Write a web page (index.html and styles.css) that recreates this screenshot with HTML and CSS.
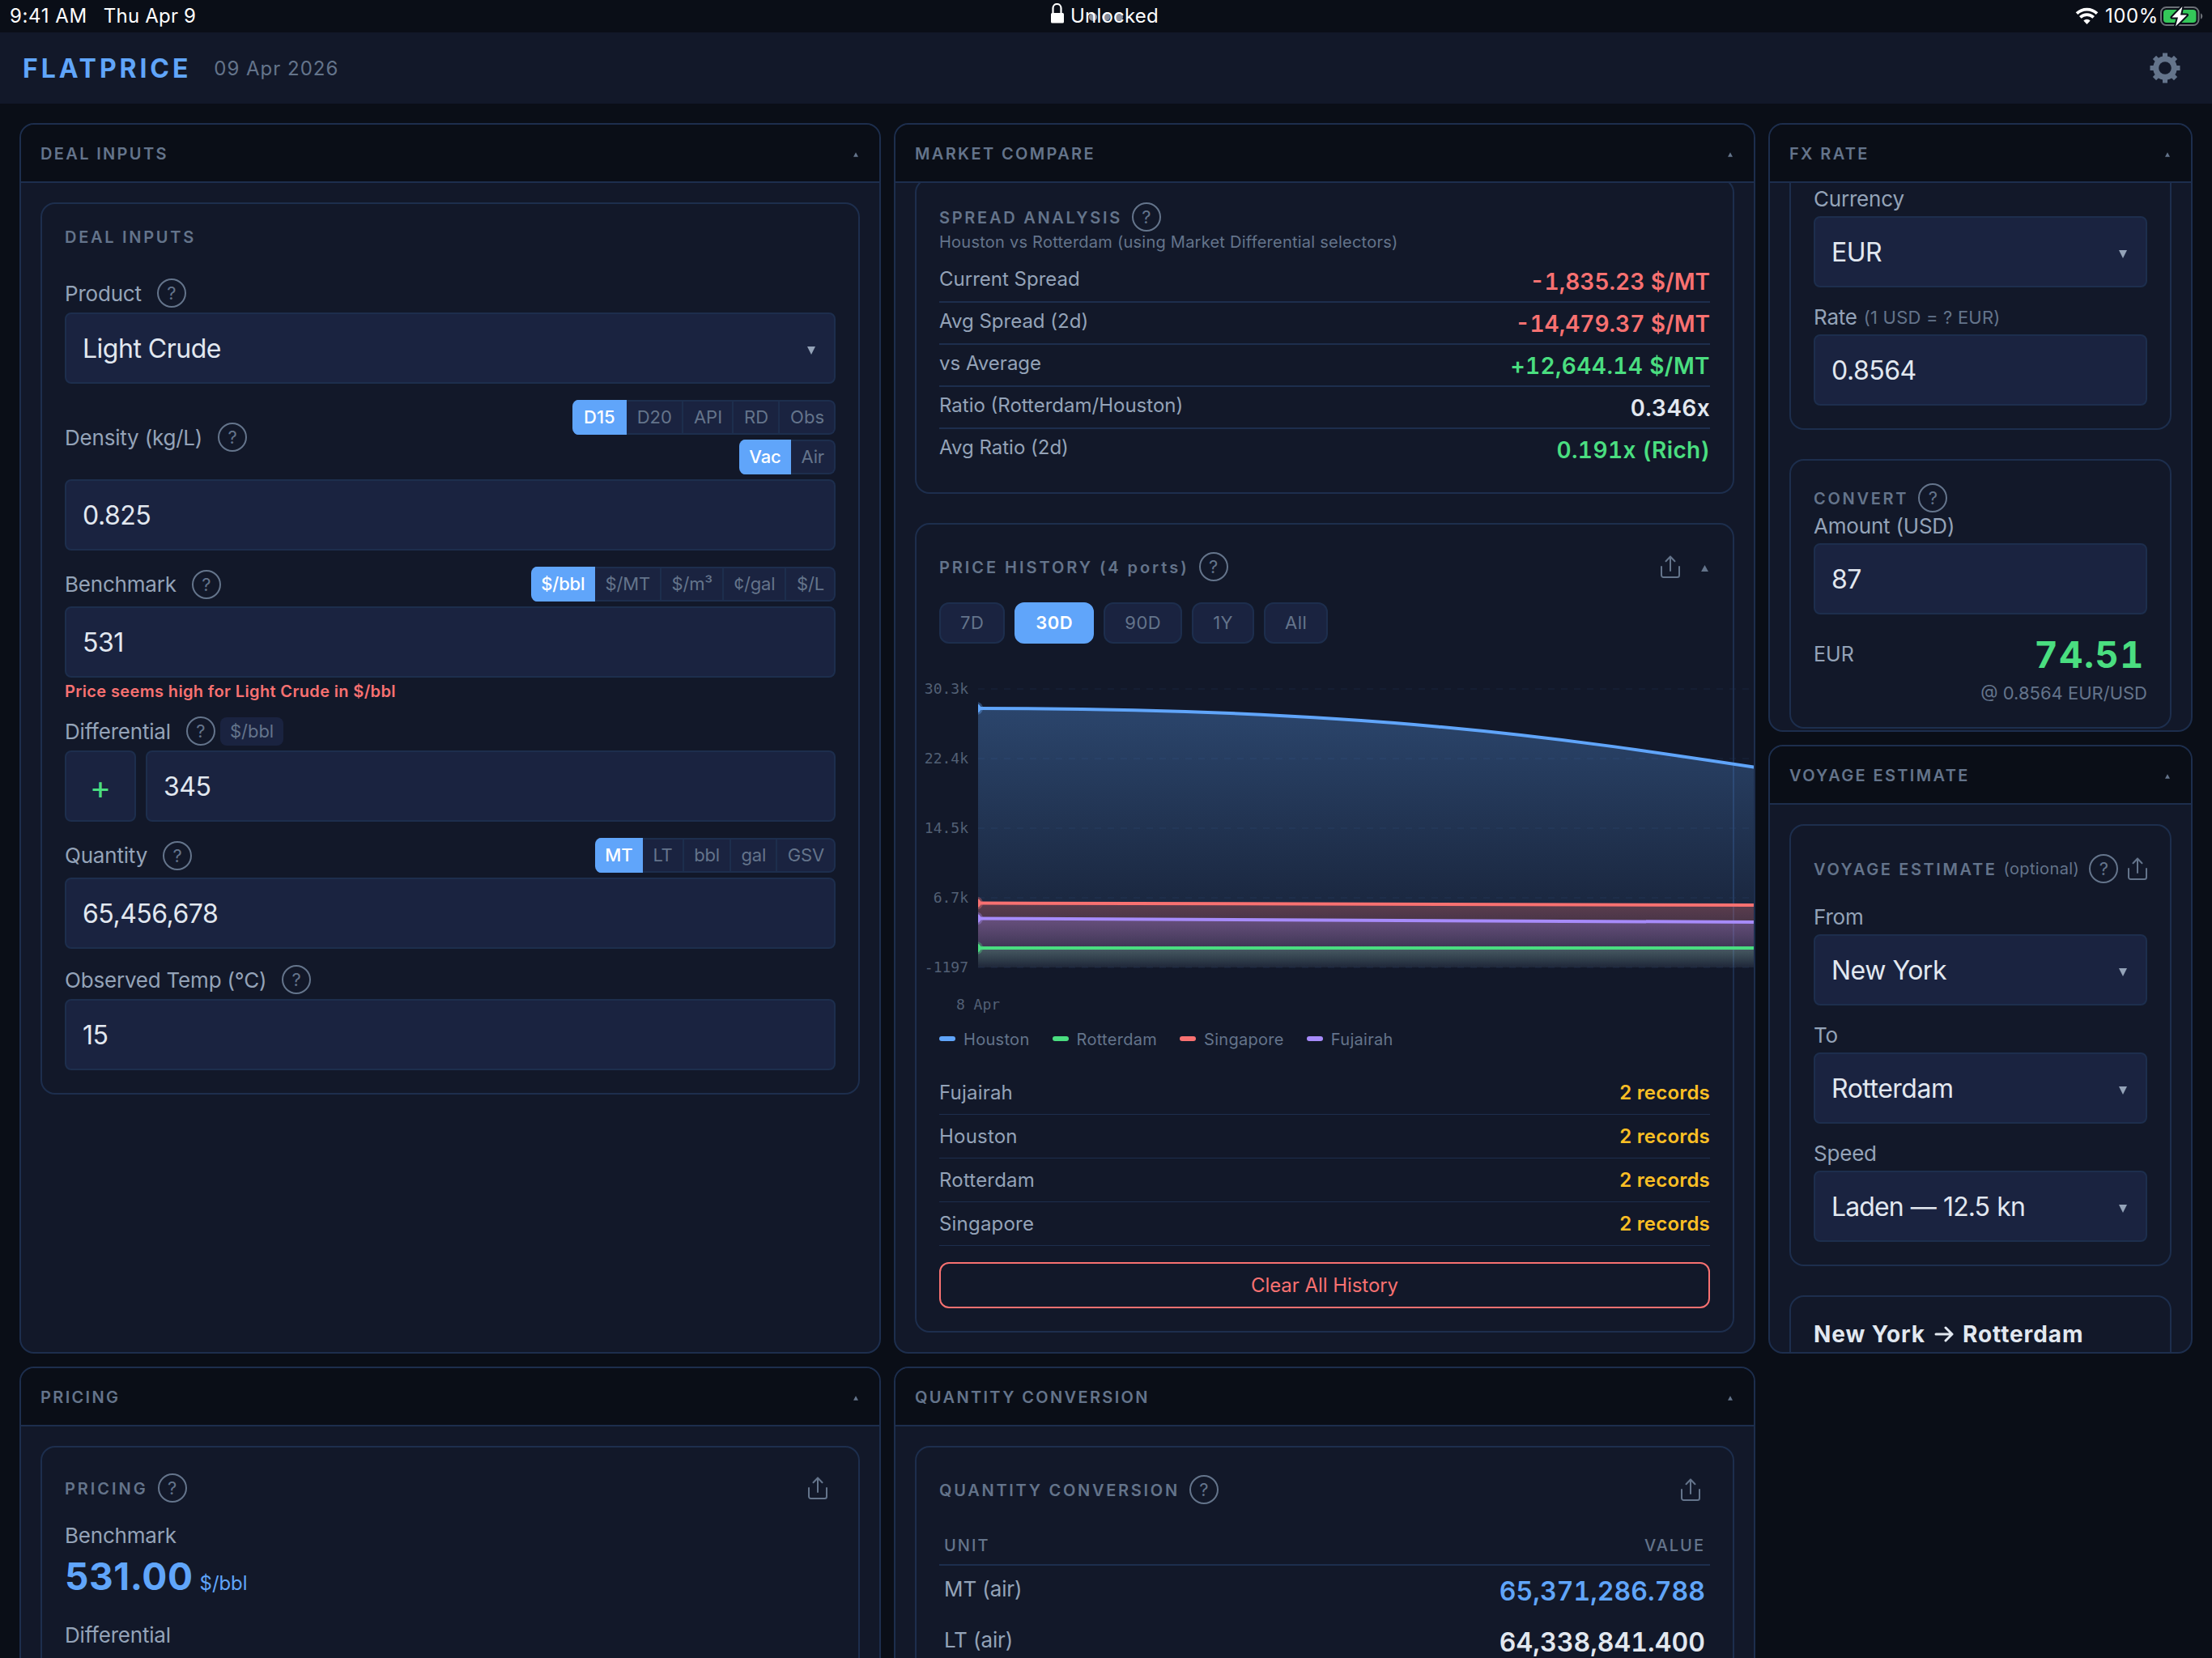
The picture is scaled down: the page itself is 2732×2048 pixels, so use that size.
FILE: index.html
```html
<!DOCTYPE html>
<html lang="en">

<head>
    <meta charset="UTF-8">
    <meta name="viewport" content="width=device-width, initial-scale=1.0">
    <title>FLATPRICE</title>
    <link rel="stylesheet" href="styles.css">
</head>

<body>
    <svg class="defs" width="0" height="0">
        <symbol id="share" viewBox="0 0 24 28">
            <path d="M12 19V1.5M6.5 7.2L12 1.5l5.5 5.7M1 14v10.5A2.5 2.5 0 0 0 3.5 27h17a2.5 2.5 0 0 0 2.5-2.5V14" fill="none" stroke="currentColor" stroke-width="2" stroke-linecap="round" stroke-linejoin="round"/>
        </symbol>
        <symbol id="up" viewBox="0 0 10 9"><path d="M5 0l5 9H0z" fill="currentColor"/></symbol>
        <symbol id="down" viewBox="0 0 10 10"><path d="M0 0h10L5 10z" fill="currentColor"/></symbol>
    </svg>

    <div class="statusbar">
        <span class="time">9:41 AM</span>
        <span class="day">Thu Apr 9</span>
        <div class="lock">
            <svg width="18" height="26" viewBox="0 0 18 26">
                <path d="M4 17V7a5 5 0 0 1 10 0v6" transform="translate(-.5 -1)" fill="none" stroke="#fff" stroke-width="2.2"/>
                <rect x="1" y="12" width="16" height="12.5" rx="1.5" fill="#fff"/>
            </svg>
            <span>Unlocked</span>
            <i class="dots"><b></b><b></b><b></b></i>
        </div>
        <div class="power">
            <svg width="29" height="22" viewBox="0 0 29 22">
                <path d="M2 7.6a18 18 0 0 1 25 0M6.3 12.4a11.8 11.8 0 0 1 16.4 0" fill="none" stroke="#fff" stroke-width="3.7"/>
                <path d="M14.5 21l-4.2-4.6a6 6 0 0 1 8.4 0z" fill="#fff"/>
            </svg>
            <span>100%</span>
            <svg class="battery" width="54" height="26" viewBox="0 0 54 26">
                <rect x="1" y="2" width="46.5" height="22" rx="6.5" fill="none" stroke="#6c7077" stroke-width="2"/>
                <path d="M50 9.5c3 1 3 6 0 7z" fill="#6c7077"/>
                <rect x="4" y="5" width="40.5" height="16" rx="4" fill="#34c759"/>
                <path d="M27.5 1L14.5 14.5h7.5L19 25.5l14-14h-8z" fill="#fff" stroke="#0a0e17" stroke-width="4" stroke-linejoin="round" paint-order="stroke"/>
            </svg>
        </div>
    </div>

    <header class="topbar">
        <h1>FLATPRICE</h1>
        <span class="date">09 Apr 2026</span>
        <svg class="gear" width="38" height="38" viewBox="-19 -19 38 38">
            <g fill="#64748b">
                <rect x="-3" y="-18.5" width="6" height="37"/>
                <rect x="-3" y="-18.5" width="6" height="37" transform="rotate(45)"/>
                <rect x="-3" y="-18.5" width="6" height="37" transform="rotate(90)"/>
                <rect x="-3" y="-18.5" width="6" height="37" transform="rotate(135)"/>
                <circle r="14.8"/>
            </g>
            <circle r="7.8" fill="#121829"/>
        </svg>
    </header>

    <main class="grid">
        <section class="panel">
            <h2 class="panel-head">DEAL INPUTS <svg class="tri"><use href="#up"/></svg></h2>
            <div class="panel-body">
                <div class="card">
                    <h3 class="title inputs-title">DEAL INPUTS</h3>

                    <div class="row"><label>Product</label><i class="help">?</i></div>
                    <div class="field">Light Crude <svg class="caret"><use href="#down"/></svg></div>

                    <div class="row">
                        <label>Density (kg/L)</label><i class="help">?</i>
                        <div class="segs">
                            <div class="seg"><span class="on">D15</span><span>D20</span><span>API</span><span>RD</span><span>Obs</span></div>
                            <div class="seg narrow"><span class="on">Vac</span><span>Air</span></div>
                        </div>
                    </div>
                    <div class="field">0.825</div>

                    <div class="row">
                        <label>Benchmark</label><i class="help">?</i>
                        <div class="segs">
                            <div class="seg narrow"><span class="on">$/bbl</span><span>$/MT</span><span>$/m³</span><span>¢/gal</span><span>$/L</span></div>
                        </div>
                    </div>
                    <div class="field">531</div>
                    <p class="warning">Price seems high for Light Crude in $/bbl</p>

                    <div class="row"><label>Differential</label><i class="help">?</i><span class="chip">$/bbl</span></div>
                    <div class="split">
                        <button class="sign">+</button>
                        <div class="field">345</div>
                    </div>

                    <div class="row">
                        <label>Quantity</label><i class="help">?</i>
                        <div class="segs">
                            <div class="seg narrow"><span class="on">MT</span><span>LT</span><span>bbl</span><span>gal</span><span>GSV</span></div>
                        </div>
                    </div>
                    <div class="field">65,456,678</div>

                    <div class="row"><label>Observed Temp (°C)</label><i class="help">?</i></div>
                    <div class="field">15</div>
                </div>
            </div>
        </section>

        <section class="panel">
            <h2 class="panel-head">MARKET COMPARE <svg class="tri"><use href="#up"/></svg></h2>
            <div class="panel-body">
                <div class="card spread">
                    <div class="title"><h3>SPREAD ANALYSIS</h3><i class="help">?</i></div>
                    <p class="sub">Houston vs Rotterdam (using Market Differential selectors)</p>
                    <div class="stat"><span>Current Spread</span><b class="red">-1,835.23 $/MT</b></div>
                    <div class="stat"><span>Avg Spread (2d)</span><b class="red">-14,479.37 $/MT</b></div>
                    <div class="stat"><span>vs Average</span><b class="green">+12,644.14 $/MT</b></div>
                    <div class="stat"><span>Ratio (Rotterdam/Houston)</span><b>0.346x</b></div>
                    <div class="stat"><span>Avg Ratio (2d)</span><b class="green">0.191x (Rich)</b></div>
                </div>

                <div class="card history">
                    <div class="title">
                        <h3>PRICE HISTORY (4 ports)</h3><i class="help">?</i>
                        <svg class="share"><use href="#share"/></svg>
                        <svg class="tri big"><use href="#up"/></svg>
                    </div>
                    <div class="ranges">
                        <span>7D</span><span class="on">30D</span><span>90D</span><span>1Y</span><span>All</span>
                    </div>
                    <svg class="chart" width="1034" height="445" viewBox="1132 815 1034 445">
                        <defs>
                            <linearGradient id="gBlue" gradientUnits="userSpaceOnUse" x1="0" y1="875" x2="0" y2="1195"><stop stop-color="#60a5fa" stop-opacity=".32"/><stop offset="1" stop-color="#60a5fa" stop-opacity=".04"/></linearGradient>
                            <linearGradient id="gRed" gradientUnits="userSpaceOnUse" x1="0" y1="1115" x2="0" y2="1195"><stop stop-color="#f87171" stop-opacity=".3"/><stop offset="1" stop-color="#f87171" stop-opacity=".02"/></linearGradient>
                            <linearGradient id="gViolet" gradientUnits="userSpaceOnUse" x1="0" y1="1134" x2="0" y2="1195"><stop stop-color="#a78bfa" stop-opacity=".3"/><stop offset="1" stop-color="#a78bfa" stop-opacity=".02"/></linearGradient>
                            <linearGradient id="gGreen" gradientUnits="userSpaceOnUse" x1="0" y1="1171" x2="0" y2="1195"><stop stop-color="#4ade80" stop-opacity=".25"/><stop offset="1" stop-color="#4ade80" stop-opacity=".02"/></linearGradient>
                            <clipPath id="plot"><rect x="1208" y="815" width="958" height="400"/></clipPath>
                        </defs>
                        <g class="lines">
                            <path d="M1208 851H2166M1208 937H2166M1208 1023H2166M1208 1109H2166M1208 1195H2166"/>
                        </g>
                        <g class="axis">
                            <text x="1196" y="857" text-anchor="end">30.3k</text>
                            <text x="1196" y="943" text-anchor="end">22.4k</text>
                            <text x="1196" y="1029" text-anchor="end">14.5k</text>
                            <text x="1196" y="1115" text-anchor="end">6.7k</text>
                            <text x="1196" y="1201" text-anchor="end">-1197</text>
                            <text x="1208" y="1247" text-anchor="middle">8 Apr</text>
                        </g>
                        <g clip-path="url(#plot)">
                            <path d="M1208 875C2166 875 2166 1020 3124 1020V1195H1208z" fill="url(#gBlue)"/>
                            <path class="line" d="M1208 875C2166 875 2166 1020 3124 1020" stroke="#60a5fa"/>
                            <path d="M1208 1171H2166V1195H1208z" fill="url(#gGreen)"/>
                            <path d="M1208 1115.5C2166 1115.5 2166 1120.5 3124 1120.5V1195H1208z" fill="url(#gRed)"/>
                            <path class="line" d="M1208 1115.5C2166 1115.5 2166 1120.5 3124 1120.5" stroke="#f87171"/>
                            <path d="M1208 1134.5C2166 1134.5 2166 1143.5 3124 1143.5V1195H1208z" fill="url(#gViolet)"/>
                            <path class="line" d="M1208 1134.5C2166 1134.5 2166 1143.5 3124 1143.5" stroke="#a78bfa"/>
                            <path class="line" d="M1208 1171H2166" stroke="#4ade80"/>
                            <g class="point" fill="#60a5fa"><circle cx="1206" cy="875" r="8"/><circle cx="1206" cy="875" r="5.5"/></g>
                            <g class="point" fill="#f87171"><circle cx="1206" cy="1115.5" r="8"/><circle cx="1206" cy="1115.5" r="5.5"/></g>
                            <g class="point" fill="#a78bfa"><circle cx="1206" cy="1134.5" r="8"/><circle cx="1206" cy="1134.5" r="5.5"/></g>
                            <g class="point" fill="#4ade80"><circle cx="1206" cy="1171" r="8"/><circle cx="1206" cy="1171" r="5.5"/></g>
                        </g>
                    </svg>
                    <div class="legend">
                        <span class="c-blue">Houston</span><span class="c-green">Rotterdam</span><span class="c-red">Singapore</span><span class="c-violet">Fujairah</span>
                    </div>
                    <div class="record"><span>Fujairah</span><b>2 records</b></div>
                    <div class="record"><span>Houston</span><b>2 records</b></div>
                    <div class="record"><span>Rotterdam</span><b>2 records</b></div>
                    <div class="record"><span>Singapore</span><b>2 records</b></div>
                    <button class="clear">Clear All History</button>
                </div>
            </div>
        </section>

        <div class="side">
            <section class="panel">
                <h2 class="panel-head">FX RATE <svg class="tri"><use href="#up"/></svg></h2>
                <div class="panel-body">
                    <div class="card cut">
                        <div class="row plain"><label>Currency</label></div>
                        <div class="field">EUR <svg class="caret"><use href="#down"/></svg></div>
                        <div class="row plain"><label>Rate</label><small>(1 USD = ? EUR)</small></div>
                        <div class="field">0.8564</div>
                    </div>
                    <div class="card">
                        <div class="title"><h3>CONVERT</h3><i class="help">?</i></div>
                        <div class="row plain"><label>Amount (USD)</label></div>
                        <div class="field">87</div>
                        <div class="result"><span>EUR</span><b>74.51</b></div>
                        <p class="note">@ 0.8564 EUR/USD</p>
                    </div>
                </div>
            </section>

            <section class="panel">
                <h2 class="panel-head">VOYAGE ESTIMATE <svg class="tri"><use href="#up"/></svg></h2>
                <div class="panel-body">
                    <div class="card">
                        <div class="title voyage-title">
                            <h3>VOYAGE ESTIMATE</h3><small>(optional)</small><i class="help">?</i>
                            <svg class="share"><use href="#share"/></svg>
                        </div>
                        <div class="row plain"><label>From</label></div>
                        <div class="field">New York <svg class="caret"><use href="#down"/></svg></div>
                        <div class="row plain"><label>To</label></div>
                        <div class="field">Rotterdam <svg class="caret"><use href="#down"/></svg></div>
                        <div class="row plain"><label>Speed</label></div>
                        <div class="field laden">Laden — 12.5 kn <svg class="caret"><use href="#down"/></svg></div>
                    </div>
                    <div class="card">
                        <p class="route">New York
                            <svg width="24" height="20" viewBox="0 0 24 20"><path d="M2 10h20M14 2l8 8-8 8" fill="none" stroke="currentColor" stroke-width="3" stroke-linecap="round" stroke-linejoin="round"/></svg>
                            Rotterdam</p>
                    </div>
                </div>
            </section>
        </div>

        <section class="panel">
            <h2 class="panel-head">PRICING <svg class="tri"><use href="#up"/></svg></h2>
            <div class="panel-body">
                <div class="card pricing">
                    <div class="title"><h3>PRICING</h3><i class="help">?</i><svg class="share"><use href="#share"/></svg></div>
                    <div class="row"><label>Benchmark</label></div>
                    <p class="price">531.00<small>$/bbl</small></p>
                    <div class="row"><label>Differential</label></div>
                </div>
            </div>
        </section>

        <section class="panel">
            <h2 class="panel-head">QUANTITY CONVERSION <svg class="tri"><use href="#up"/></svg></h2>
            <div class="panel-body">
                <div class="card quantity">
                    <div class="title"><h3>QUANTITY CONVERSION</h3><i class="help">?</i><svg class="share"><use href="#share"/></svg></div>
                    <div class="unit-head"><span>UNIT</span><span>VALUE</span></div>
                    <div class="unit"><span>MT (air)</span><b class="blue">65,371,286.788</b></div>
                    <div class="unit"><span>LT (air)</span><b>64,338,841.400</b></div>
                </div>
            </div>
        </section>
    </main>
</body>

</html>
```
FILE: styles.css
```css
:root {
    --bg: #0a0e17;
    --panel: #121829;
    --field: #1a2340;
    --line: #1d2e4d;
    --text: #e2e8f0;
    --label: #94a3b8;
    --muted: #64748b;
    --blue: #60a5fa;
    --green: #4ade80;
    --red: #f87171;
}

* {
    box-sizing: border-box;
    margin: 0;
    padding: 0;
}

html,
body {
    width: 2732px;
    height: 2048px;
    overflow: hidden;
}

body {
    background: var(--bg);
    color: var(--text);
    font-family: Inter, "Liberation Sans", sans-serif;
    font-size: 26px;
    white-space: nowrap;
}

i {
    font-style: normal;
}

svg {
    flex: none;
}

.defs {
    display: block;
    height: 0;
}

/* status bar */
.statusbar {
    height: 40px;
    display: flex;
    align-items: center;
    padding: 0 10px 1px 12px;
    color: #fff;
    font-size: 24px;
    position: relative;
}

.time {
    letter-spacing: .6px;
    margin-right: 20px;
}

.day {
    letter-spacing: .2px;
}

.lock {
    position: absolute;
    left: 1297px;
    top: 0;
    height: 39px;
    display: flex;
    align-items: center;
    gap: 7px;
    letter-spacing: .2px;
}

.lock svg {
    margin-top: -6px;
}

.lock span {
    position: relative;
    z-index: 1;
}

.dots {
    position: absolute;
    left: 48px;
    top: 16px;
    display: flex;
    gap: 6px;
}

.dots b {
    width: 10px;
    height: 10px;
    border-radius: 50%;
    background: #858996;
}

.power {
    margin-left: auto;
    display: flex;
    align-items: center;
    gap: 8px;
    letter-spacing: .6px;
}

.battery {
    margin-left: -6px;
}

/* top bar */
.topbar {
    height: 88px;
    background: var(--panel);
    display: flex;
    align-items: center;
    padding: 0 39px 0 28px;
}

.topbar h1 {
    font-size: 32px;
    font-weight: 700;
    color: var(--blue);
    letter-spacing: 3.9px;
}

.date {
    font-size: 24px;
    color: var(--muted);
    letter-spacing: 1px;
    margin-left: 28px;
}

.gear {
    margin-left: auto;
}

/* panels */
.grid {
    padding: 24px;
    display: grid;
    grid-template-columns: 1064px 1064px 524px;
    grid-template-rows: 1520px 1520px;
    gap: 16px;
}

.side {
    display: flex;
    flex-direction: column;
    gap: 16px;
}

.side .panel {
    height: 752px;
}

.panel {
    background: var(--panel);
    border: 2px solid var(--line);
    border-radius: 18px;
    overflow: hidden;
    display: flex;
    flex-direction: column;
}

.panel-head {
    flex: none;
    height: 72px;
    padding: 2px 26px 0 24px;
    display: flex;
    align-items: center;
    justify-content: space-between;
    background: var(--bg);
    border-bottom: 2px solid var(--line);
    color: var(--muted);
    font-size: 20px;
    font-weight: 600;
    letter-spacing: 2.35px;
}

.tri {
    width: 6px;
    height: 6px;
    margin-top: 1px;
    color: var(--muted);
}

.panel-body {
    flex: 1;
    min-height: 0;
    padding: 24px;
    overflow: hidden;
}

.card {
    border: 2px solid var(--line);
    border-radius: 18px;
    padding: 28px;
}

.card + .card {
    margin-top: 36px;
}

.cut {
    margin-top: -24px;
    padding-top: 3px;
    border-top: 0;
    border-radius: 0 0 18px 18px;
}

.title {
    display: flex;
    align-items: center;
    height: 36px;
    color: var(--muted);
    font-size: 20px;
}

.title h3,
h3.title {
    font-size: 20px;
    font-weight: 600;
    letter-spacing: 2.72px;
}

.title h3 {
    padding-top: 2px;
}

.title .help {
    margin-left: 12px;
}

.inputs-title {
    height: 26px;
    margin-bottom: 38px;
}

.help {
    flex: none;
    width: 36px;
    height: 36px;
    border: 2px solid var(--muted);
    border-radius: 50%;
    color: var(--muted);
    font-size: 22px;
    line-height: 32px;
    text-align: center;
}

.share {
    width: 24px;
    height: 28px;
    color: var(--muted);
}

/* form */
.row {
    display: flex;
    align-items: center;
    min-height: 36px;
    margin-bottom: 6px;
}

.row.plain {
    height: 32px;
    min-height: 32px;
}

.row label {
    color: var(--label);
    letter-spacing: -.2px;
}

.row .help {
    margin-left: 19px;
}

.row small {
    margin-left: 8px;
    padding-top: 1px;
    font-size: 22px;
    letter-spacing: .2px;
    color: var(--muted);
}

.field {
    height: 88px;
    padding: 0 23px 0 20px;
    display: flex;
    align-items: center;
    justify-content: space-between;
    background: var(--field);
    border: 2px solid var(--line);
    border-radius: 8px;
    font-size: 32px;
    letter-spacing: -.5px;
}

.field + .row,
.split + .row {
    margin-top: 20px;
}

.laden {
    letter-spacing: -.9px;
    word-spacing: 1px;
}

.caret {
    width: 10px;
    height: 10px;
    margin-top: 5px;
    color: var(--label);
}

.segs {
    margin-left: auto;
    display: flex;
    flex-direction: column;
    align-items: flex-end;
    gap: 6px;
}

.seg {
    display: flex;
    height: 43px;
    border-radius: 8px;
    overflow: hidden;
    background: var(--field);
    color: var(--muted);
    font-size: 22px;
    line-height: 39px;
}

.seg span {
    padding: 0 12px 0 13px;
    border: 2px solid var(--line);
    border-left: 0;
}

.seg span:last-child {
    border-radius: 0 8px 8px 0;
}

.seg .on {
    padding-left: 14px;
    background: var(--blue);
    border-color: var(--blue);
    color: #fff;
    font-weight: 500;
}

.narrow span {
    letter-spacing: -.15px;
    padding-left: 12.5px;
}

.narrow .on {
    padding: 0 10.5px 0 12px;
}

.warning {
    margin-top: 5px;
    height: 23px;
    line-height: 24px;
    margin-bottom: 20px;
    color: var(--red);
    font-size: 20px;
    font-weight: 600;
    letter-spacing: .36px;
}

.chip {
    margin-left: 6px;
    height: 35px;
    padding: 0 12px;
    border-radius: 8px;
    background: var(--field);
    color: var(--muted);
    font-size: 22px;
    line-height: 35px;
}

.split {
    display: flex;
    gap: 12px;
}

.split .field {
    flex: 1;
}

.sign {
    width: 88px;
    height: 88px;
    padding-top: 3px;
    background: var(--field);
    border: 2px solid var(--line);
    border-radius: 8px;
    color: var(--green);
    font: 400 40px Inter, sans-serif;
}

/* spread analysis */
.spread {
    margin-top: -30px;
    height: 390px;
}

.sub {
    height: 26px;
    line-height: 26px;
    margin-bottom: 10px;
    color: var(--muted);
    font-size: 20px;
    letter-spacing: .24px;
}

.stat {
    display: flex;
    justify-content: space-between;
    align-items: center;
    height: 52px;
    border-bottom: 2px solid var(--line);
}

.stat:last-child {
    border-bottom-color: transparent;
}

.stat span {
    color: var(--label);
    font-size: 24px;
    margin-bottom: 5px;
}

.stat b {
    padding-top: 1px;
    font-size: 28px;
    font-weight: 600;
    font-variant-numeric: tabular-nums;
    letter-spacing: .4px;
}

.red {
    color: var(--red);
}

.stat .red {
    letter-spacing: 0;
}

.green {
    color: var(--green);
}

.blue {
    color: var(--blue);
}

/* price history */
.history .title {
    height: 48px;
    margin-bottom: 20px;
}

.history h3 {
    letter-spacing: 2.95px;
}

.history .share {
    margin-left: auto;
}

.big {
    width: 9px;
    height: 8px;
    margin: 3px 2px 0 26px;
}

.ranges {
    display: flex;
    gap: 12px;
    margin-bottom: 20px;
}

.ranges span {
    height: 51px;
    padding: 0 24px;
    border: 2px solid var(--line);
    border-radius: 12px;
    background: var(--field);
    color: var(--muted);
    font-size: 22px;
    line-height: 47px;
    letter-spacing: .5px;
}

.ranges .on {
    background: var(--blue);
    border-color: var(--blue);
    color: #fff;
    font-weight: 600;
}

.chart {
    display: block;
    position: relative;
    margin-left: -28px;
}

.lines path {
    stroke: var(--line);
    stroke-width: 2;
    stroke-dasharray: 8 8;
    opacity: .28;
}

.axis text {
    font: 18px "DejaVu Sans Mono", monospace;
    fill: #526075;
}

.line {
    fill: none;
    stroke-width: 4;
}

.point circle:first-child {
    opacity: .35;
}

.legend {
    display: flex;
    gap: 28px;
    height: 24px;
    margin: 12px 0 27px;
    color: var(--muted);
    font-size: 20px;
    letter-spacing: .3px;
    line-height: 24px;
}

.legend span {
    display: flex;
    gap: 10px;
}

.legend span::before {
    content: "";
    width: 20px;
    height: 6px;
    margin-top: 8px;
    border-radius: 3px;
    background: currentColor;
}

.c-blue::before { color: #60a5fa; }
.c-green::before { color: #4ade80; }
.c-red::before { color: #f87171; }
.c-violet::before { color: #a78bfa; }

.record {
    display: flex;
    justify-content: space-between;
    align-items: center;
    height: 54px;
    border-bottom: 1px solid var(--line);
    color: var(--label);
    font-size: 24px;
    letter-spacing: .2px;
}

.record b {
    color: #fbbf24;
    font-weight: 600;
}

.clear {
    display: block;
    width: 100%;
    height: 57px;
    margin-top: 20px;
    border: 2px solid var(--red);
    border-radius: 12px;
    background: none;
    color: var(--red);
    font: 24px Inter, sans-serif;
    letter-spacing: -.05px;
}

/* fx convert */
.result {
    display: flex;
    align-items: center;
    justify-content: space-between;
    height: 58px;
    margin-top: 20px;
    color: var(--label);
}

.result span {
    font-size: 25px;
}

.result b {
    color: var(--green);
    font-size: 45px;
    font-weight: 700;
    font-variant-numeric: tabular-nums;
    letter-spacing: 1.6px;
    padding-right: 3px;
}

.note {
    height: 28px;
    margin-top: 5px;
    line-height: 28px;
    color: var(--muted);
    font-size: 22px;
    text-align: right;
}

/* voyage */
.voyage-title {
    height: 50px;
    margin-bottom: 18px;
}

.voyage-title h3 {
    letter-spacing: 2.6px;
}

.voyage-title small {
    font-size: 20px;
    margin-left: 8px;
    letter-spacing: .4px;
}

.voyage-title .share {
    margin-left: 12px;
}

.route {
    display: flex;
    align-items: center;
    gap: 11px;
    height: 36px;
    font-size: 28px;
    font-weight: 700;
    letter-spacing: .9px;
}

/* pricing */
.pricing .title {
    height: 44px;
    margin-bottom: 18px;
}

.pricing h3 {
    letter-spacing: 2.95px;
}

.pricing .share,
.quantity .share {
    margin-left: auto;
    margin-right: 10px;
}

.quantity .share {
    margin-right: 12px;
}

.price {
    height: 54px;
    line-height: 54px;
    margin-bottom: 27px;
    color: var(--blue);
    font-size: 46px;
    font-weight: 700;
    letter-spacing: .6px;
}

.price small {
    margin-left: 8px;
    font-size: 24px;
    font-weight: 400;
    letter-spacing: -.1px;
}

/* quantity conversion */
.quantity {
    height: 1300px;
}

.quantity .title {
    height: 48px;
    margin-bottom: 22px;
}

.unit-head,
.unit {
    display: flex;
    justify-content: space-between;
    align-items: center;
    height: 63px;
    padding: 0 6px;
}

.unit-head {
    height: 48px;
    border-bottom: 2px solid var(--line);
    color: var(--muted);
    font-size: 20px;
    font-weight: 500;
    letter-spacing: 2px;
}

.unit span {
    color: var(--label);
    letter-spacing: -.1px;
    margin-bottom: 7px;
}

.unit b {
    font-size: 32px;
    font-weight: 600;
    font-variant-numeric: tabular-nums;
    letter-spacing: .05px;
}
```
